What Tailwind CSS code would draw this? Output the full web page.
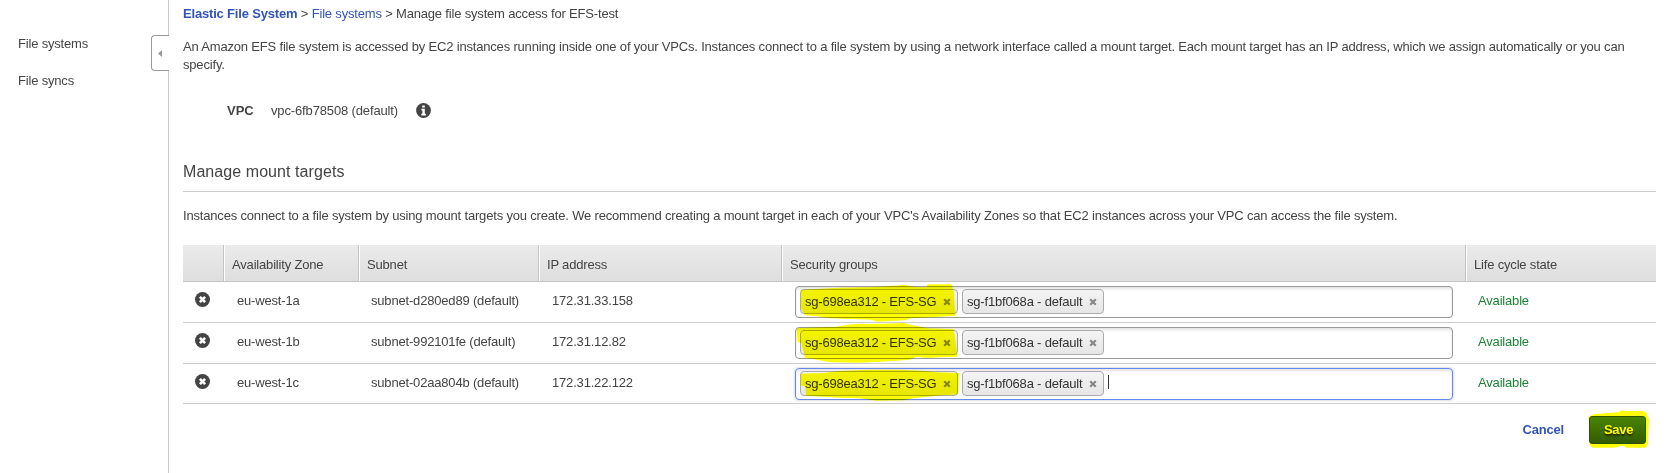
<!DOCTYPE html>
<html lang="en">
<head>
<meta charset="utf-8">
<title>Manage file system access</title>
<script src="https://cdn.jsdelivr.net/npm/@tailwindcss/browser@4"></script>
</head>
<body class="bg-white">
<svg class="hidden">
  <symbol id="remove" viewBox="0 0 15 15"><circle cx="7.5" cy="7.5" r="7.5" fill="#444"/><path d="M4.9 4.9l5.2 5.2M10.1 4.9l-5.2 5.2" stroke="#fff" stroke-width="2.7"/></symbol>
  <symbol id="x" viewBox="0 0 8 8"><path d="M1.2 1.2l5.6 5.6M6.8 1.2L1.2 6.8" stroke="#888" stroke-width="2.2"/></symbol>
</svg>
<div class="relative flex h-[473px] w-[1668px] overflow-hidden font-['Liberation_Sans',Arial,sans-serif] text-[13px] leading-[18px] tracking-[-0.18px] text-[#444]">
  <nav class="relative flex w-[169px] shrink-0 flex-col gap-[19px] border-r border-[#ccc] pt-[35px] pl-[18px]">
    <a>File systems</a>
    <a>File syncs</a>
    <div class="absolute top-[35px] -right-px flex h-9 w-[18px] items-center rounded-l-[4px] border border-r-0 border-[#999] bg-white pl-[6px]">
      <svg class="h-[7px] w-1" viewBox="0 0 4 7"><path d="M4 0v7L0 3.5z" fill="#999"/></svg>
    </div>
  </nav>
  <main class="w-[1487px] pt-[5px] pl-[14px]">
    <div><span class="font-bold text-[#3355b8]">Elastic File System</span> &gt; <span class="text-[#3355b8]">File systems</span> &gt; Manage file system access for EFS-test</div>
    <p class="mt-[15px]">An Amazon EFS file system is accessed by EC2 instances running inside one of your VPCs. Instances connect to a file system by using a network interface called a mount target. Each mount target has an IP address, which we assign automatically or you can specify.</p>
    <div class="mt-7 flex items-center pl-[44px]">
      <span class="w-[44px] font-bold tracking-normal">VPC</span><span class="w-[145px] tracking-[-0.14px]">vpc-6fb78508 (default)</span>
      <svg class="-mt-px h-[15px] w-[15px]" viewBox="0 0 15 15"><circle cx="7.5" cy="7.5" r="7.4" fill="#444"/><path d="M6.2 2.4h2.6v2.2H6.2zM5.4 5.8h3.4v5h1.1v1.6H5.3v-1.6h1.1V7.4h-1z" fill="#fff"/></svg>
    </div>
    <h2 class="mt-[42px] border-b border-[#ccc] pb-[9px] text-[16px] leading-5 tracking-[0.07px]">Manage mount targets</h2>
    <p class="mt-[15px]">Instances connect to a file system by using mount targets you create. We recommend creating a mount target in each of your VPC's Availability Zones so that EC2 instances across your VPC can access the file system.</p>
    <div class="mt-5 grid h-[37px] grid-cols-[41px_135px_180px_243px_684px_190px] items-stretch border-b border-[#c4c4c4] bg-linear-to-b from-[#ebebeb] to-[#dedede] leading-[39px]">
      <div class="border-r border-[#c4c4c4]"></div>
      <div class="h-9 border-r border-l border-r-[#c4c4c4] border-l-white pl-[7px]">Availability Zone</div>
      <div class="h-9 border-r border-l border-r-[#c4c4c4] border-l-white pl-[7px]">Subnet</div>
      <div class="h-9 border-r border-l border-r-[#c4c4c4] border-l-white pl-[7px]">IP address</div>
      <div class="h-9 border-r border-l border-r-[#c4c4c4] border-l-white pl-[7px]">Security groups</div>
      <div class="h-9 border-l border-l-white pl-[7px]">Life cycle state</div>
    </div>
    <div class="grid h-[41px] grid-cols-[41px_135px_180px_243px_684px_190px] border-b border-[#ccc] leading-[37px]">
      <div class="pt-[10px] pl-[12px]"><svg class="h-[15px] w-[15px]"><use href="#remove"/></svg></div>
      <div class="pl-[13px]">eu-west-1a</div><div class="pl-[12px]">subnet-d280ed89 (default)</div><div class="pl-[13px]">172.31.33.158</div>
      <div class="pt-1 pl-[13px]">
        <div class="flex h-8 w-[658px] gap-1 rounded-[4px] border border-[#999] p-[3px] pt-[2px] pl-[4px] leading-[23px] text-[#333] shadow-[inset_0_2px_3px_#e4e4e4]">
          <div class="flex h-[25px] w-[158px] items-center justify-between rounded-[4px] border border-[#aaa] bg-linear-to-b from-[#f4f4f4] to-[#e6e6e6] pr-[6px] pl-[4px] tracking-[-0.22px]">sg-698ea312 - EFS-SG<svg class="mt-px h-2 w-2"><use href="#x"/></svg></div>
          <div class="flex h-[25px] w-[142px] items-center justify-between rounded-[4px] border border-[#aaa] bg-linear-to-b from-[#f4f4f4] to-[#e6e6e6] pr-[6px] pl-[4px]">sg-f1bf068a - default<svg class="mt-px h-2 w-2"><use href="#x"/></svg></div>
        </div>
      </div>
      <div class="pl-[12px] text-[#1d8436]">Available</div>
    </div>
    <div class="grid h-[41px] grid-cols-[41px_135px_180px_243px_684px_190px] border-b border-[#ccc] leading-[37px]">
      <div class="pt-[10px] pl-[12px]"><svg class="h-[15px] w-[15px]"><use href="#remove"/></svg></div>
      <div class="pl-[13px]">eu-west-1b</div><div class="pl-[12px]">subnet-992101fe (default)</div><div class="pl-[13px]">172.31.12.82</div>
      <div class="pt-1 pl-[13px]">
        <div class="flex h-8 w-[658px] gap-1 rounded-[4px] border border-[#999] p-[3px] pt-[2px] pl-[4px] leading-[23px] text-[#333] shadow-[inset_0_2px_3px_#e4e4e4]">
          <div class="flex h-[25px] w-[158px] items-center justify-between rounded-[4px] border border-[#aaa] bg-linear-to-b from-[#f4f4f4] to-[#e6e6e6] pr-[6px] pl-[4px] tracking-[-0.22px]">sg-698ea312 - EFS-SG<svg class="mt-px h-2 w-2"><use href="#x"/></svg></div>
          <div class="flex h-[25px] w-[142px] items-center justify-between rounded-[4px] border border-[#aaa] bg-linear-to-b from-[#f4f4f4] to-[#e6e6e6] pr-[6px] pl-[4px]">sg-f1bf068a - default<svg class="mt-px h-2 w-2"><use href="#x"/></svg></div>
        </div>
      </div>
      <div class="pl-[12px] text-[#1d8436]">Available</div>
    </div>
    <div class="grid h-[40px] grid-cols-[41px_135px_180px_243px_684px_190px] border-b border-[#ccc] leading-[37px]">
      <div class="pt-[10px] pl-[12px]"><svg class="h-[15px] w-[15px]"><use href="#remove"/></svg></div>
      <div class="pl-[13px]">eu-west-1c</div><div class="pl-[12px]">subnet-02aa804b (default)</div><div class="pl-[13px]">172.31.22.122</div>
      <div class="pt-1 pl-[13px]">
        <div class="flex h-8 w-[658px] gap-1 rounded-[4px] border border-[#6688ee] p-[3px] pt-[2px] pl-[4px] leading-[23px] text-[#333] shadow-[inset_0_2px_3px_#e4e4e4,0_0_3px_#bbb]">
          <div class="flex h-[25px] w-[158px] items-center justify-between rounded-[4px] border border-[#aaa] bg-linear-to-b from-[#f4f4f4] to-[#e6e6e6] pr-[6px] pl-[4px] tracking-[-0.22px]">sg-698ea312 - EFS-SG<svg class="mt-px h-2 w-2"><use href="#x"/></svg></div>
          <div class="flex h-[25px] w-[142px] items-center justify-between rounded-[4px] border border-[#aaa] bg-linear-to-b from-[#f4f4f4] to-[#e6e6e6] pr-[6px] pl-[4px]">sg-f1bf068a - default<svg class="mt-px h-2 w-2"><use href="#x"/></svg></div>
          <div class="mt-[4px] h-[14px] w-px bg-[#333]"></div>
        </div>
      </div>
      <div class="pl-[12px] text-[#1d8436]">Available</div>
    </div>
    <div class="mt-3 flex items-center justify-end pr-[10px] font-bold">
      <span class="mr-[25px] text-[#3355b8]">Cancel</span>
      <button class="h-[28px] w-[57px] rounded-[3px] border border-[#2c5200] bg-linear-to-b from-[#4b8400] to-[#325c00] pl-[2px] tracking-[-0.3px] text-white [text-shadow:0_2px_2px_#222]">Save</button>
    </div>
  </main>
  <!-- highlighter marks -->
  <svg class="pointer-events-none absolute top-[275px] left-[780px] h-[130px] w-[340px] mix-blend-multiply" viewBox="0 0 1020 390" fill="#ff0">
    <path d="M63 45L105 42 180 38 285 36 375 30 410 36 440 37 443 28 515 28 521 50 527 122 470 126 390 130 375 136 290 140 275 134 150 130 110 124 75 121 63 100z"/>
    <path d="M50 160L120 157 170 155 215 148 310 146 370 144 400 151 445 160 520 162 526 190 532 245 440 248 405 246 390 254 300 260 240 263 150 262 120 256 75 248 64 204 52 200z"/>
    <path d="M63 296L130 294 175 288 270 284 360 284 440 288 470 292 537 294 535 358 470 362 400 370 370 376 290 377 240 370 180 368 78 362 76 334 63 332z"/>
  </svg>
  <svg class="pointer-events-none absolute top-[405px] left-[1580px] h-[50px] w-[80px] mix-blend-multiply" viewBox="0 0 240 150" fill="#ff0">
    <path d="M25 35L45 27 118 22 120 17 190 18 200 25 207 45 204 95 204 118 195 128 140 128 130 122 100 128 38 128 28 118 30 80z"/>
  </svg>
</div>
</body>
</html>
